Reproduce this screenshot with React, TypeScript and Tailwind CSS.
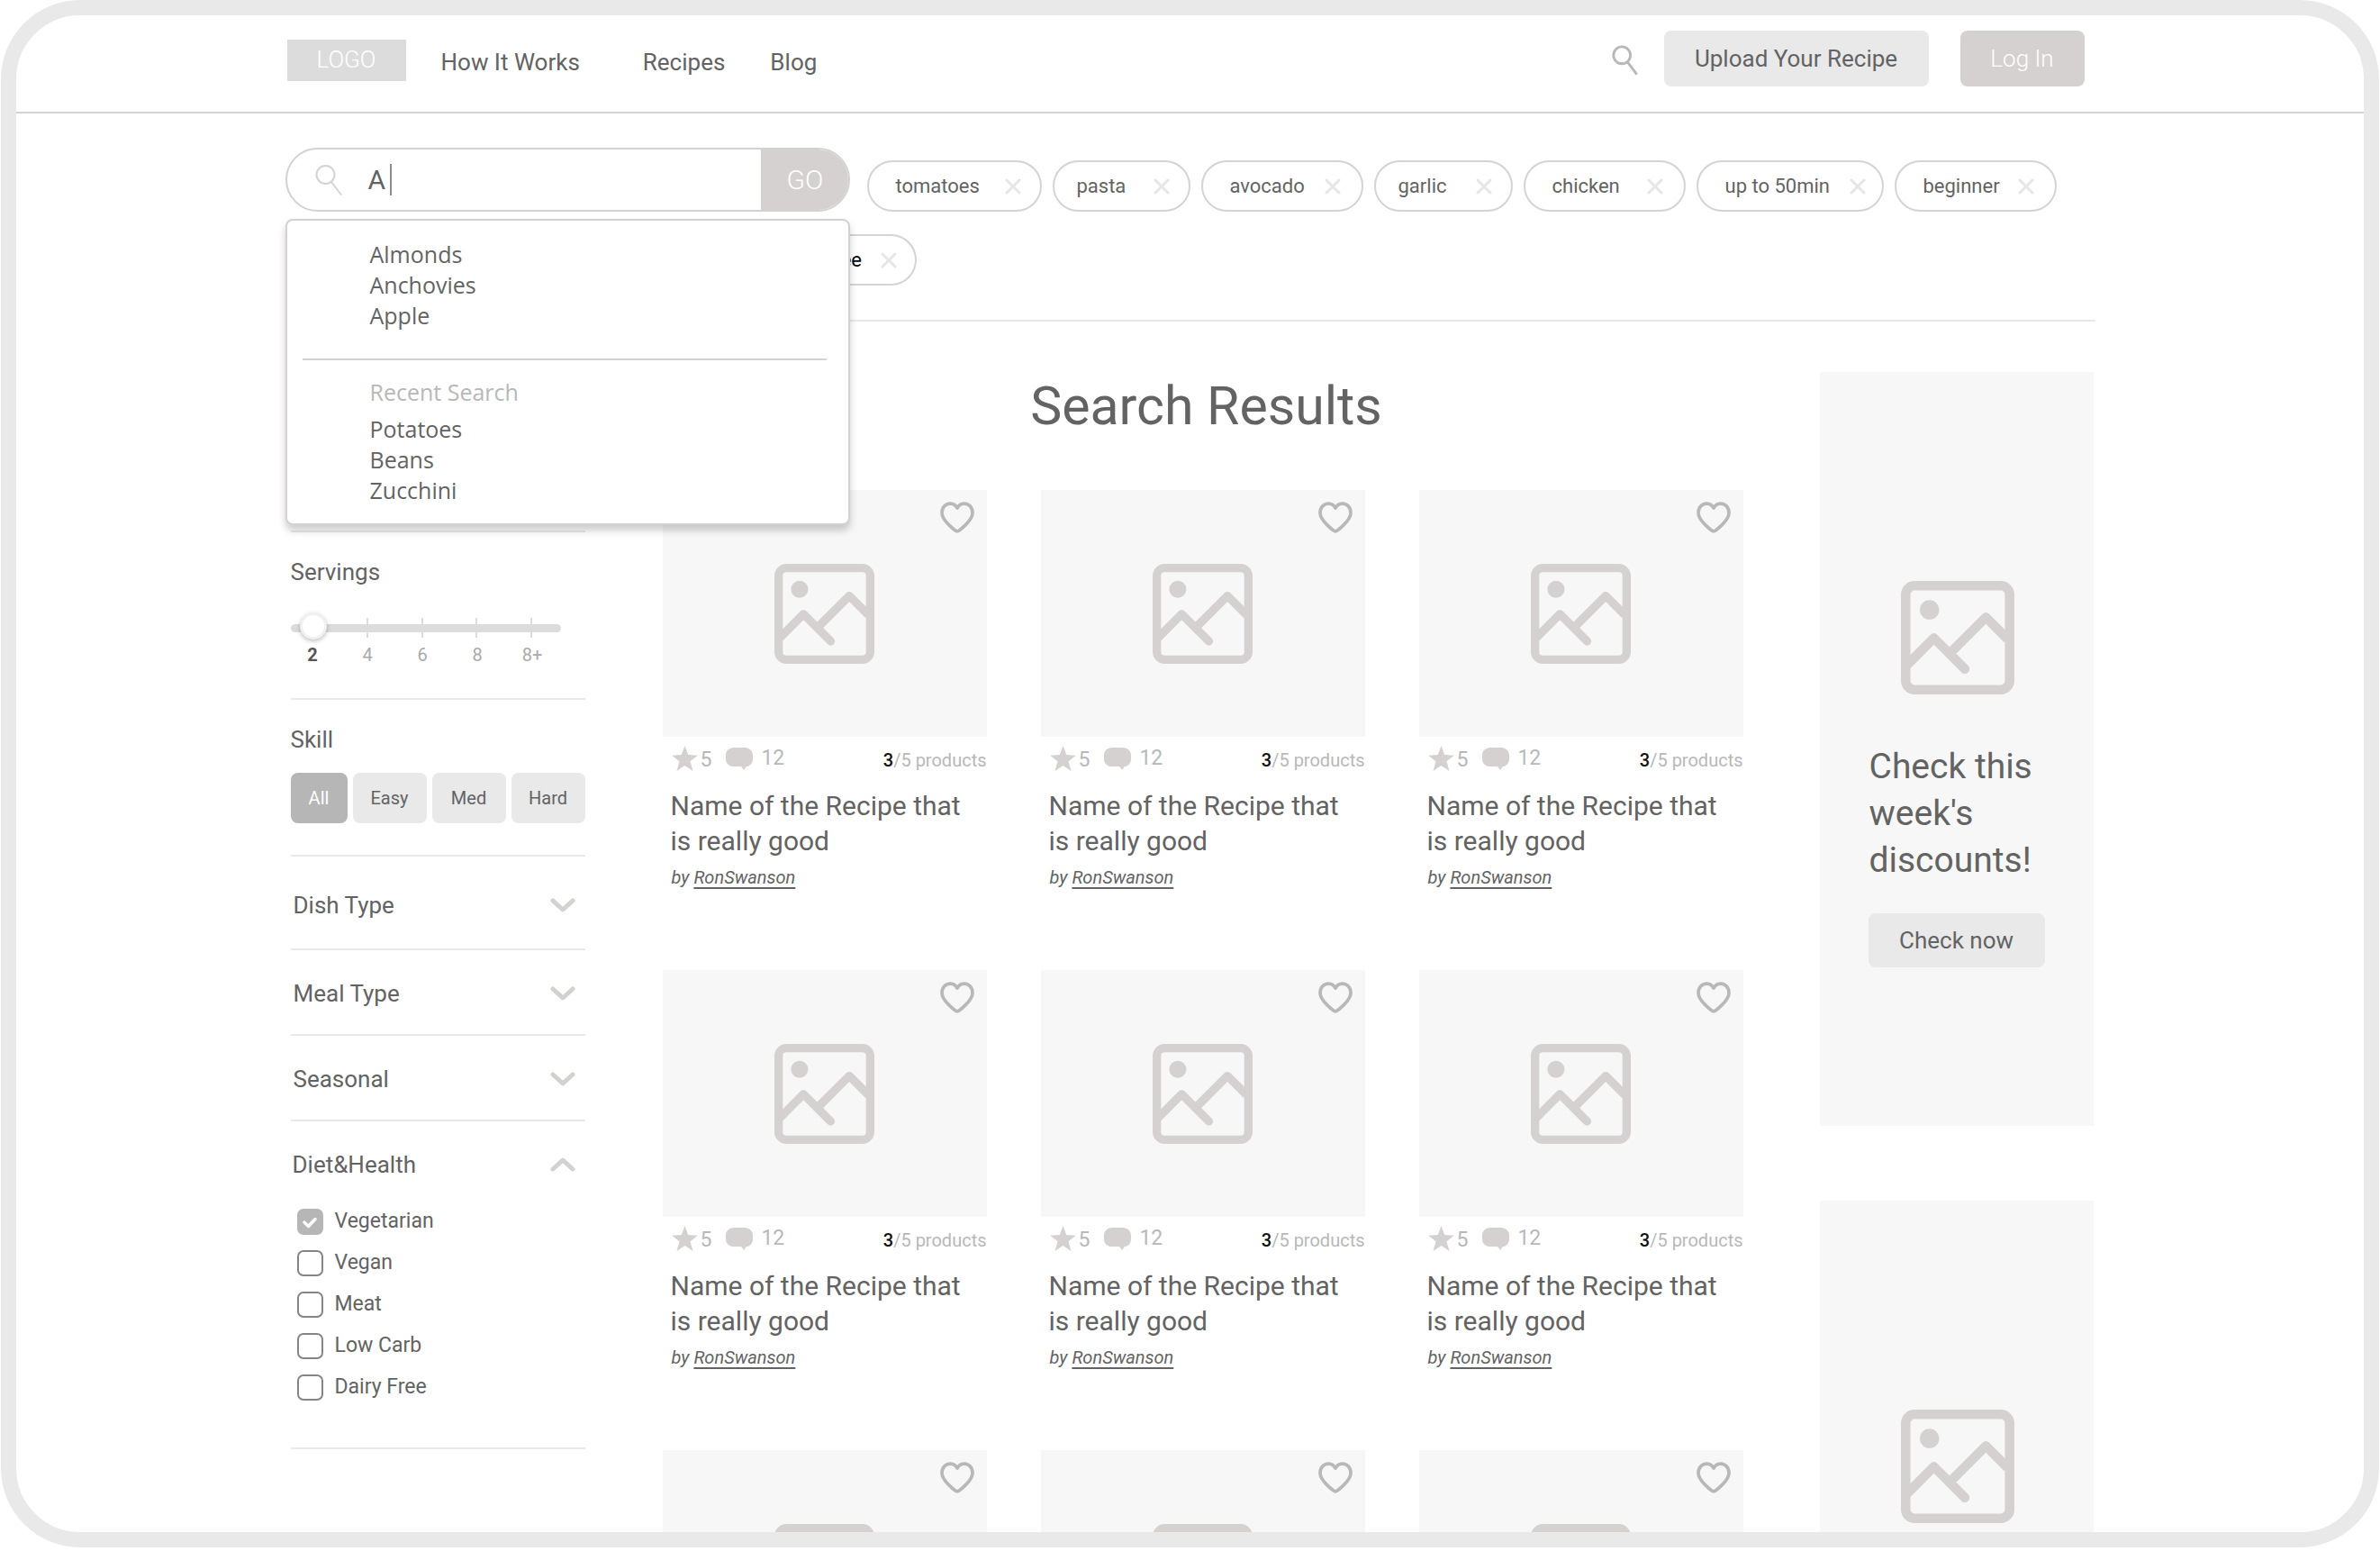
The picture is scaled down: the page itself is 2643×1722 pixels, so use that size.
import React from "react";

function PictureIcon({ className }: { className: string }) {
  return (
    <svg viewBox="0 0 334 334" fill="none" stroke="#d5d1d0" strokeWidth="28" className={className} aria-hidden="true">
      <rect x="14" y="14" width="306" height="306" rx="26" />
      <circle cx="84" cy="85" r="28.5" fill="#d5d1d0" stroke="none" />
      <path d="M20 245 97 168 188 259" strokeLinecap="round" strokeLinejoin="round" />
      <path d="M152 205 250 107 314 171" strokeLinejoin="round" />
    </svg>
  );
}

function HeartIcon() {
  return (
    <svg viewBox="0 0 114 104" fill="none" stroke="#b8b8b8" strokeWidth="11" strokeLinejoin="round" className="h-[35px] w-[38px]" aria-hidden="true">
      <path d="M57 98C52 98 6 63 6 37 6 19 18 6 34 6c10 0 18 5 23 15C62 11 70 6 80 6c16 0 28 13 28 31 0 26-46 61-51 61Z" />
    </svg>
  );
}

function StarIcon() {
  return (
    <svg viewBox="0 0 86 84" fill="#d5d1d0" className="h-7 w-[29px]" aria-hidden="true">
      <path d="M43 0 54 30 86 32 61 52 70 84 43 66 16 84 25 52 0 32 32 30Z" />
    </svg>
  );
}

function BubbleIcon() {
  return (
    <svg viewBox="0 0 90 75" fill="#d5d1d0" className="h-[25px] w-[30px]" aria-hidden="true">
      <path d="M28 0H62C79 0 90 11 90 26V38C90 53 79 63 68 63L61 75 51 63H28C11 63 0 53 0 38V26C0 11 11 0 28 0Z" />
    </svg>
  );
}

function SearchIcon({ className, stroke, width }: { className: string; stroke: string; width: number }) {
  return (
    <svg viewBox="0 0 30 36" fill="none" stroke={stroke} strokeWidth={width} className={className} aria-hidden="true">
      <circle cx="11.5" cy="12" r="10" />
      <path d="M18 20 29 34.500" />
    </svg>
  );
}

function Chevron({ up = false }: { up?: boolean }) {
  return (
    <svg viewBox="0 0 28 16" fill="none" stroke="#d5d1d0" strokeWidth="5" strokeLinecap="round" strokeLinejoin="round" className="h-4 w-7" aria-hidden="true">
      <path d={up ? "M3 13 14 3 25 13" : "M3 3 14 13 25 3"} />
    </svg>
  );
}

function CloseIcon() {
  return (
    <svg viewBox="0 0 18 18" fill="none" stroke="#e6e6e6" strokeWidth="3" strokeLinecap="round" className="h-[18px] w-[18px]" aria-hidden="true">
      <path d="M2 2 16 16M16 2 2 16" />
    </svg>
  );
}

const chips = [
  { label: "tomatoes", box: "w-[194px] pl-[30px] pr-[21px]" },
  { label: "pasta", box: "w-[153px] pl-[25px] pr-[21px]" },
  { label: "avocado", box: "w-[180px] pl-[30px] pr-[23px]" },
  { label: "garlic", box: "w-[154px] pl-[25px] pr-[21px]" },
  { label: "chicken", box: "w-[180px] pl-[30px] pr-[23px]" },
  { label: "up to 50min", box: "w-[208px] pl-[30px] pr-[18px]" },
  { label: "beginner", box: "w-[180px] pl-[30px] pr-[23px]" },
];

function Chip({ label, box }: { label: string; box: string }) {
  return (
    <div className={`flex h-[57px] shrink-0 items-center justify-between rounded-full border-2 border-[#d5d3d3] text-[22px] leading-8 ${box}`}>
      <span>{label}</span>
      <button type="button" aria-label={`Remove ${label}`}>
        <CloseIcon />
      </button>
    </div>
  );
}

function Header() {
  return (
    <header className="border-b-2 border-[#d5d2d2]">
      <div className="mx-auto flex max-w-[2010px] items-center pt-[17px] pr-3 pb-7 pl-[2px]">
        <a href="#" className="mt-[3px] flex h-[46px] w-[132px] items-center justify-center bg-[#dcdcdc] text-[26px] font-light text-white">
          LOGO
        </a>
        <nav className="mt-2 ml-[39px] flex text-[26px] leading-8">
          <a href="#" className="mr-[70px]">How It Works</a>
          <a href="#" className="mr-[50px]">Recipes</a>
          <a href="#">Blog</a>
        </nav>
        <div className="ml-auto flex items-center">
          <button type="button" aria-label="Search" className="mt-1 mr-[29px]">
            <SearchIcon className="h-[34px] w-[29px]" stroke="#b8b8b8" width={3} />
          </button>
          <button type="button" className="mr-[35px] h-[62px] w-[294px] rounded-lg bg-[#e9e9e9] text-[26px]">
            Upload Your Recipe
          </button>
          <button type="button" className="h-[62px] w-[138px] rounded-lg bg-[#d5d1d0] text-[26px] font-light text-white">
            Log In
          </button>
        </div>
      </div>
    </header>
  );
}

function SuggestionList({ items }: { items: string[] }) {
  return (
    <ul>
      {items.map((item) => (
        <li key={item}>
          <a href="#">{item}</a>
        </li>
      ))}
    </ul>
  );
}

function SearchBox() {
  return (
    <div className="relative w-[627px] shrink-0">
      <form className="flex h-[71px] overflow-hidden rounded-full border-2 border-[#d3d1d1]">
        <label htmlFor="q" className="flex items-center pl-[31px]" aria-label="Search ingredients">
          <SearchIcon className="h-9 w-[30px]" stroke="#d5d3d3" width={2} />
        </label>
        <div className="relative flex-1">
          <input id="q" type="text" defaultValue="A" className="h-full w-full pl-[29px] text-[30px] outline-none" />
          <span className="absolute top-4 left-[53px] h-[35px] w-[2px] bg-[#8a8a8a]" />
        </div>
        <button type="submit" className="w-[97px] bg-[#d5d1d0] pl-[2px] text-[30px] font-light text-white">
          GO
        </button>
      </form>
      <div className="absolute top-[79px] left-0 z-10 w-full rounded-lg border-2 border-[#d3d1d1] bg-white py-5 font-['Open_Sans','Noto_Sans',sans-serif] text-[25px] leading-[34px] shadow-[0_6px_8px_rgba(0,0,0,0.2)]">
        <div className="pl-[92px]">
          <SuggestionList items={["Almonds", "Anchovies", "Apple"]} />
        </div>
        <hr className="mt-[31px] mr-6 mb-[18px] ml-[17px] border-t-2 border-[#d3d1d1]" />
        <div className="pl-[92px]">
          <h2 className="mb-[7px] text-[#b8b8b8]">Recent Search</h2>
          <SuggestionList items={["Potatoes", "Beans", "Zucchini"]} />
        </div>
      </div>
    </div>
  );
}

const labelRow = "text-[26px] leading-8";

function Collapsed({ title, first = false }: { title: string; first?: boolean }) {
  return (
    <section className={`border-b-2 border-[#e9e9e9] ${first ? "pt-[38px] pb-8" : "pt-8 pb-[29px]"}`}>
      <button type="button" aria-expanded="false" className={`flex w-full items-center justify-between pr-[11px] pl-[3px] ${labelRow}`}>
        {title}
        <Chevron />
      </button>
    </section>
  );
}

const diets = ["Vegetarian", "Vegan", "Meat", "Low Carb", "Dairy Free"];

function Sidebar() {
  return (
    <aside className="w-[333px] shrink-0 pt-[232px] pl-[6px]">
      <section className="border-y-2 border-[#e9e9e9] pt-7 pb-9">
        <label htmlFor="servings" className={`block ${labelRow}`}>Servings</label>
        <div className="relative mt-[29px] flex h-[34px] w-[300px] items-center">
          <div className="h-[9px] w-full rounded-full bg-[#dcdcdc]" />
          <div className="absolute right-[32px] left-[24px] flex h-[22px] justify-between">
            {[2, 4, 6, 8, 10].map((n) => (
              <span key={n} className="w-[2px] bg-[#dcdcdc]" />
            ))}
          </div>
          <input
            id="servings"
            type="range"
            min="2"
            max="10"
            step="2"
            defaultValue="2"
            className="absolute top-0 left-[10px] h-[30px] w-[272px] appearance-none bg-transparent [&::-webkit-slider-thumb]:h-[30px] [&::-webkit-slider-thumb]:w-[30px] [&::-webkit-slider-thumb]:appearance-none [&::-webkit-slider-thumb]:rounded-full [&::-webkit-slider-thumb]:border-3 [&::-webkit-slider-thumb]:border-[#f1f1f1] [&::-webkit-slider-thumb]:bg-white [&::-webkit-slider-thumb]:shadow-[0_2px_5px_rgba(0,0,0,0.25)]"
          />
        </div>
        <div className="mt-px -ml-[6px] grid w-[305px] grid-cols-5 text-center text-[20px] leading-6 text-[#aaaaaa]">
          <span className="font-bold text-[#555555]">2</span>
          <span>4</span>
          <span>6</span>
          <span>8</span>
          <span>8+</span>
        </div>
      </section>
      <section className="border-b-2 border-[#e9e9e9] pt-7 pb-[35px]">
        <h3 className={labelRow}>Skill</h3>
        <div className="mt-[21px] flex gap-[6px] text-[20px]">
          <button type="button" className="h-14 w-[63px] rounded-lg bg-[#b6b6b6] text-white">All</button>
          <button type="button" className="h-14 flex-1 rounded-lg bg-[#e9e9e9]">Easy</button>
          <button type="button" className="h-14 flex-1 rounded-lg bg-[#e9e9e9]">Med</button>
          <button type="button" className="h-14 flex-1 rounded-lg bg-[#e9e9e9]">Hard</button>
        </div>
      </section>
      <Collapsed title="Dish Type" first />
      <Collapsed title="Meal Type" />
      <Collapsed title="Seasonal" />
      <section className="border-b-2 border-[#e9e9e9] pt-8 pb-11">
        <button type="button" aria-expanded="true" className={`flex w-full items-center justify-between pr-[11px] pl-[2px] ${labelRow}`}>
          Diet&amp;Health
          <Chevron up />
        </button>
        <div className="mt-6 pl-[7px]">
          {diets.map((d, i) => (
            <label key={d} className="flex h-[46px] items-center gap-[13px] text-[23px] leading-8">
              <span className="relative flex">
                <input
                  type="checkbox"
                  defaultChecked={i === 0}
                  className="peer h-[29px] w-[29px] appearance-none rounded-[7px] border-2 border-[#858585] checked:border-[#b6b6b6] checked:bg-[#b6b6b6]"
                />
                <svg viewBox="0 0 29 29" fill="none" stroke="white" strokeWidth="3.500" strokeLinecap="round" strokeLinejoin="round" className="pointer-events-none absolute inset-0 hidden peer-checked:block" aria-hidden="true">
                  <path d="M8 15 12.500 19.500 20 11.500" />
                </svg>
              </span>
              {d}
            </label>
          ))}
        </div>
      </section>
    </aside>
  );
}

function CardPicture() {
  return (
    <div className="relative flex h-[274px] items-center justify-center bg-[#f7f7f7]">
      <PictureIcon className="h-[111px] w-[111px]" />
      <button type="button" aria-label="Save recipe" className="absolute top-[13px] right-[14px]">
        <HeartIcon />
      </button>
    </div>
  );
}

function RecipeCard() {
  return (
    <article>
      <CardPicture />
      <div className="mt-[10px] flex h-7 items-center pl-[10px] text-[23px] leading-7 text-[#b8b8b8]">
        <StarIcon />
        <span className="mt-[3px] ml-[3px]">5</span>
        <span className="mr-[9px] ml-4">
          <BubbleIcon />
        </span>
        <span>12</span>
        <span className="mt-[3px] ml-auto text-[20px]">
          <span className="font-medium text-[#111111]">3</span>/5 products
        </span>
      </div>
      <h2 className="mt-[19px] pr-4 pl-[9px] text-[30px] leading-[39px]">Name of the Recipe that is really good</h2>
      <p className="mt-[9px] pl-[10px] text-[20px] leading-6 italic">
        by{" "}
        <a href="#" className="underline decoration-2 underline-offset-4">
          RonSwanson
        </a>
      </p>
    </article>
  );
}

function Promo({ children }: { children?: React.ReactNode }) {
  return (
    <section className="h-[837px] bg-[#f7f7f7] px-[54px] pt-[232px]">
      <PictureIcon className="ml-9 h-[126px] w-[126px]" />
      {children}
    </section>
  );
}

export default function App() {
  return (
    <div className="h-screen bg-white px-px pb-[4px] font-[Roboto,sans-serif] text-[#636363]">
      <div className="h-full overflow-hidden rounded-[88px] border-[17px] border-[#e9e9e9]">
        <Header />
        <main className="mx-auto max-w-[2010px] pt-[38px]">
          <div className="flex">
            <SearchBox />
            <div className="flex gap-3 pt-[14px] pl-[19px]">
              {chips.map((c) => (
                <Chip key={c.label} label={c.label} box={c.box} />
              ))}
            </div>
          </div>
          <div className="mt-[25px] flex pl-[508px] text-black">
            <Chip label="dairy free" box="w-[193px] pl-[39px] pr-[20px]" />
          </div>
          <hr className="mt-[38px] border-t-2 border-[#e9e9e9]" />
          <div className="flex">
            <Sidebar />
            <div className="mr-[85px] ml-[86px] flex-1 pt-[58px]">
              <h1 className="pl-[8px] text-center text-[59px] leading-[72px]">Search Results</h1>
              <div className="mt-[57px] grid grid-cols-3 gap-x-[60px] gap-y-[91px]">
                {[1, 2, 3, 4, 5, 6].map((n) => (
                  <RecipeCard key={n} />
                ))}
                {[7, 8, 9].map((n) => (
                  <CardPicture key={n} />
                ))}
              </div>
            </div>
            <div className="mr-[2px] flex w-[304px] shrink-0 flex-col gap-[83px] pt-14">
              <Promo>
                <h2 className="mt-[54px] pl-px text-[39px] leading-[52px]">Check this week's discounts!</h2>
                <button type="button" className="mt-[33px] h-[60px] w-full rounded-lg bg-[#e9e9e9] text-[26px]">
                  Check now
                </button>
              </Promo>
              <Promo />
            </div>
          </div>
        </main>
      </div>
    </div>
  );
}
